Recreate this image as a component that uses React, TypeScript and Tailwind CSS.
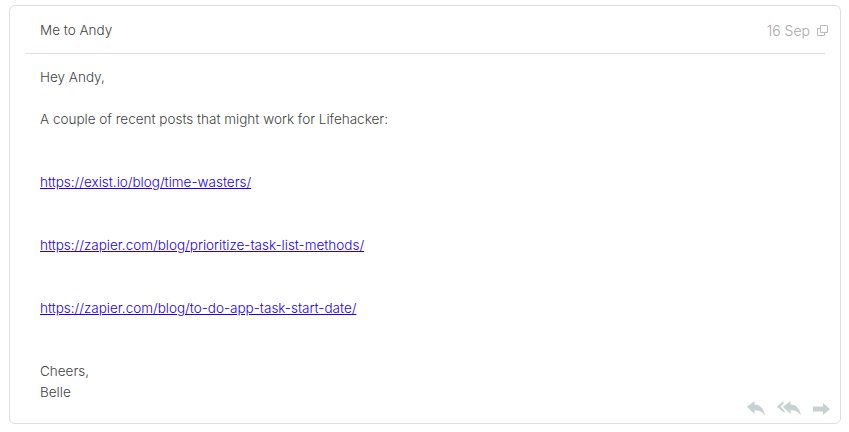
const links = [
  'https://exist.io/blog/time-wasters/',
  'https://zapier.com/blog/prioritize-task-list-methods/',
  'https://zapier.com/blog/to-do-app-task-start-date/',
]

function ReplyIcon({ className }: { className?: string }) {
  return <svg viewBox="0 0 18 15" className={className} fill="currentColor">
    <path d="M0 5.800 7.500 0v3.600c5.800 .3 9.300 3.700 10.300 11-2.200-3.700-5.300-5.300-10.300-5.300v3.800Z" />
  </svg>
}

function ReplyAllIcon({ className }: { className?: string }) {
  return <svg viewBox="0 0 24 15" className={className} fill="currentColor">
    <path d="M0 5.800 6.500 0v2.500L3.500 5.800 7.500 9.500v2.500Z" />
    <path d="M6 5.800 13.500 0v3.600c5.800 .3 9.300 3.700 10.300 11-2.200-3.700-5.300-5.300-10.300-5.300v3.800Z" />
  </svg>
}

function ForwardIcon({ className }: { className?: string }) {
  return <svg viewBox="0 0 17 12" className={className} fill="currentColor">
    <path d="M0 3.500h10V0l7 6-7 6V8.500H0Z" />
  </svg>
}

export default function App() {
  return <div className="h-[432px] w-[849px] bg-white pt-[5px] pl-[9px] font-['Inter',sans-serif] text-[13.5px] leading-[21px] font-light text-[#444]">
    <div className="relative h-[419px] w-[832px] rounded-[6px] border border-[#dedede] px-[15px]">
      <div className="flex h-[48px] items-center justify-between border-b border-[#e2e2e2] pt-[2px] pr-0 pl-[15px]">
        <span>Me to Andy</span>
        <span className="-mr-[3px] flex items-center gap-[7px] text-[14px] text-[#aaa]">
          16 Sep
          <svg viewBox="0 0 11 11" className="h-[11px] w-[11px] text-[#bbb]" fill="none" stroke="currentColor">
            <path d="M3.500.5h7v7h-7ZM3.500 3.500h-3v7h7v-3" />
          </svg>
        </span>
      </div>
      <div className="px-[15px] pt-[13px]">
        <p>Hey Andy,</p>
        <p className="mt-[21px]">A couple of recent posts that might work for Lifehacker:</p>
        {links.map((link) => <p key={link} className="mt-[42px]">
          <a href={link} className="text-[#2200ee] underline">{link}</a>
        </p>)}
        <p className="mt-[42px]">Cheers,</p>
        <p>Belle</p>
      </div>
      <div className="absolute right-[10px] bottom-[7px] flex items-center gap-[12px] text-[#c8d1d1]">
        <ReplyIcon className="h-[15px] w-[18px]" />
        <ReplyAllIcon className="h-[15px] w-[24px]" />
        <ForwardIcon className="h-[12px] w-[17px]" />
      </div>
    </div>
  </div>
}
